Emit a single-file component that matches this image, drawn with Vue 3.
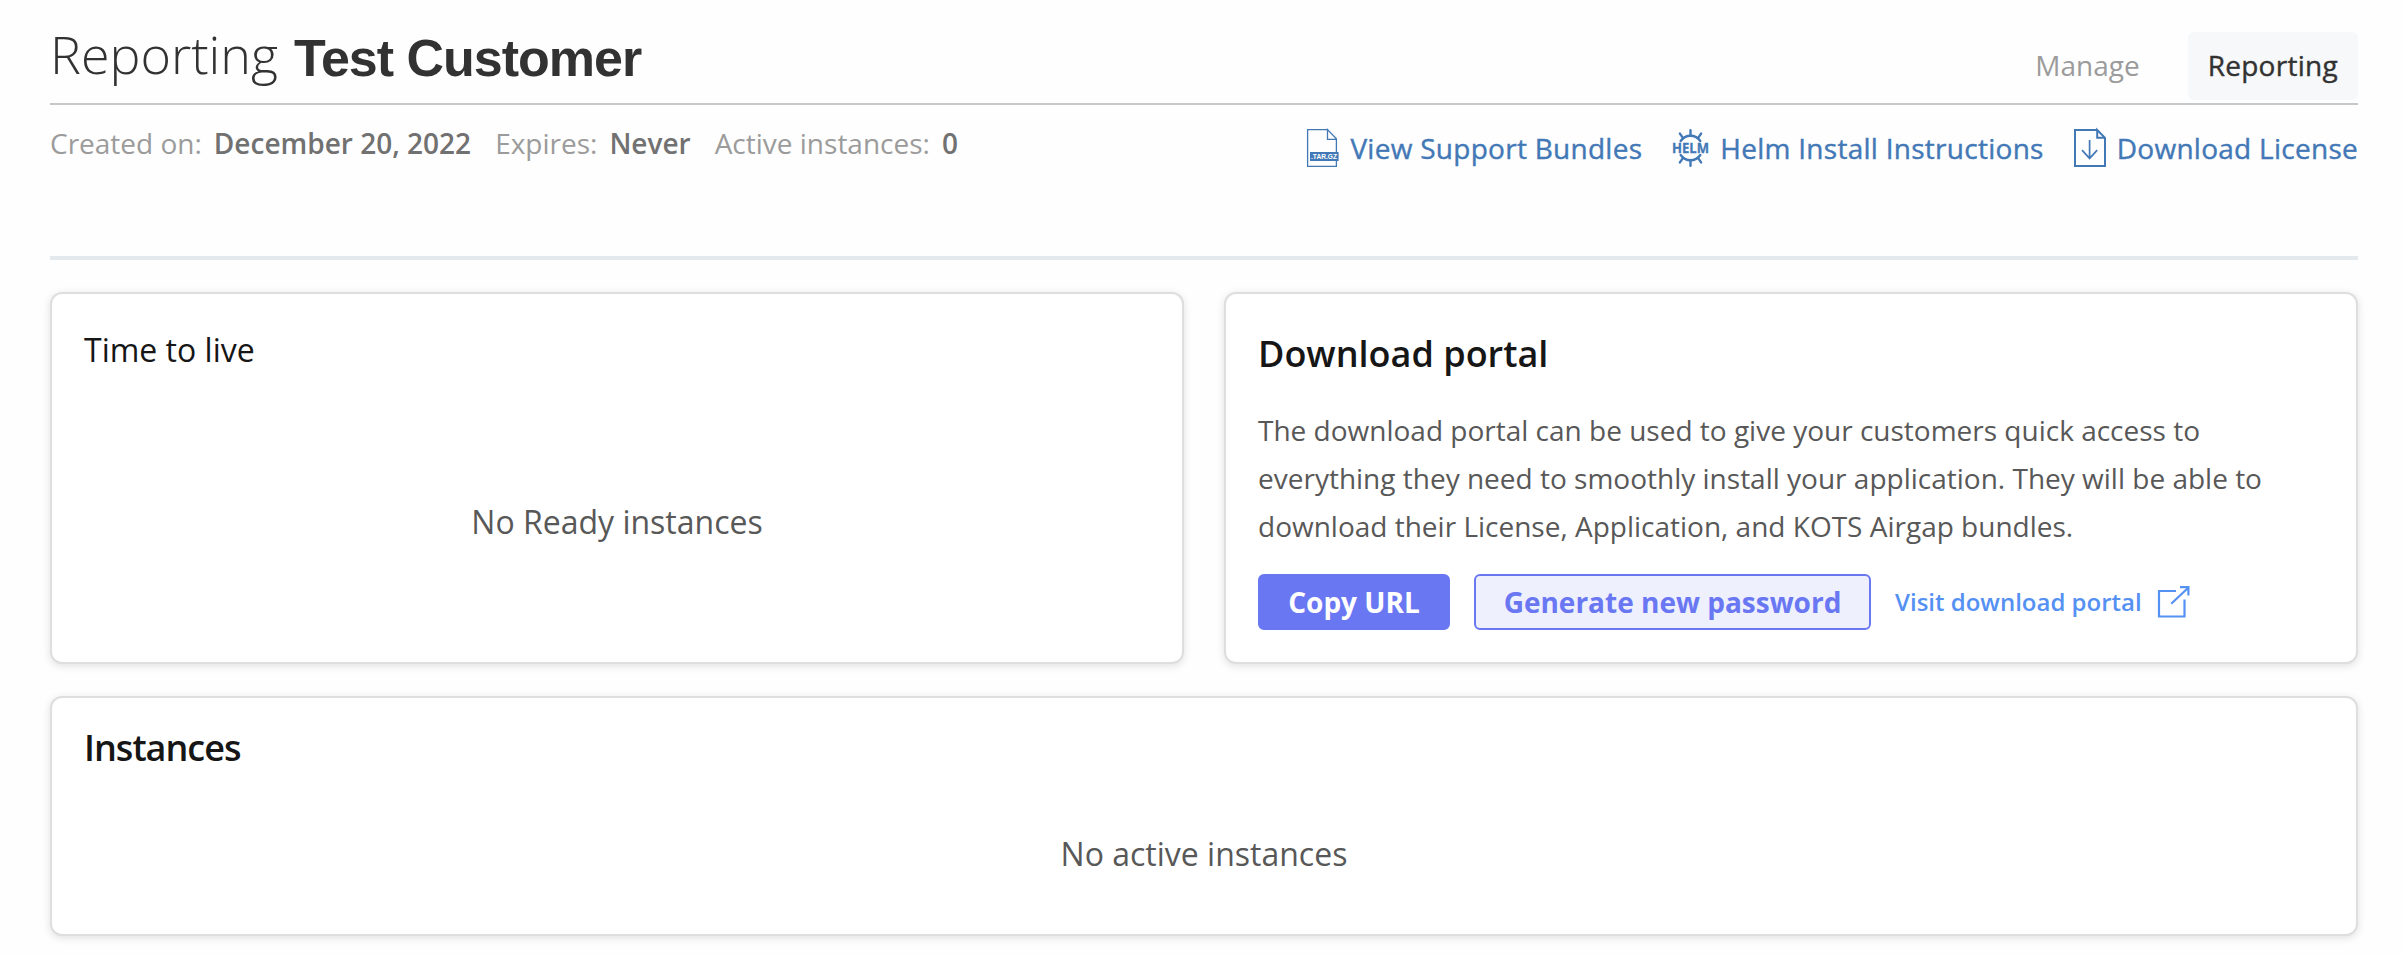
<script setup>
const meta = [
  { label: 'Created on:', value: 'December 20, 2022' },
  { label: 'Expires:', value: 'Never' },
  { label: 'Active instances:', value: '0' },
]
</script>

<template>
  <div class="page">
    <header class="header">
      <h1 class="title"><span class="title-light">Reporting</span><span class="title-name">Test Customer</span></h1>
      <nav class="tabs">
        <a class="tab">Manage</a>
        <a class="tab active">Reporting</a>
      </nav>
    </header>

    <section class="subheader">
      <div class="meta">
        <div v-for="m in meta" :key="m.label" class="meta-item">
          <span>{{ m.label }}</span><strong>{{ m.value }}</strong>
        </div>
      </div>
      <div class="links">
        <a class="link">
          <svg width="32" height="38" viewBox="0 0 32 38">
            <path d="M20.5.6H.6V37.4H29.4V9.8L20.5.6V10.4H29.4" fill="none" stroke="#4378b6" stroke-width="1.3" />
            <rect x="3" y="23" width="28.6" height="9" fill="#4378b6" />
            <text x="4" y="30.2" textLength="26" lengthAdjust="spacingAndGlyphs" font-family="Liberation Sans" font-weight="700" font-size="7.6" fill="#fff">.TAR.GZ</text>
          </svg>
          <span class="medium">View Support Bundles</span>
        </a>
        <a class="link">
          <svg width="37" height="38" viewBox="0 0 37 38">
            <g fill="none" stroke="#4378b6" stroke-width="2.4" stroke-linecap="round">
              <path d="M8.7 12A11.8 11.8 0 0 1 28.3 12M8.7 26A11.8 11.8 0 0 0 28.3 26" />
              <path d="M18.5 1.2V6M18.5 32V36.8M7.9 4.6L10.7 8.6M29.1 4.6L26.3 8.6M7.9 33.4L10.7 29.4M29.1 33.4L26.3 29.4" />
            </g>
            <text x="0" y="24.3" textLength="37" lengthAdjust="spacingAndGlyphs" font-family="Open Sans" font-weight="700" font-size="15" fill="#4378b6" stroke="#4378b6" stroke-width="0.3">HELM</text>
          </svg>
          <span class="medium">Helm Install Instructions</span>
        </a>
        <a class="link">
          <svg width="32" height="38" viewBox="0 0 32 38">
            <path d="M23.2 1H1V37H31V8.8L23.2 1V8.8H31" fill="none" stroke="#4378b6" stroke-width="2" />
            <path d="M15.6 11V29.4M8 21.2L15.6 29.4L23.2 21.2" fill="none" stroke="#4378b6" stroke-width="1.7" />
          </svg>
          <span class="medium">Download License</span>
        </a>
      </div>
    </section>

    <div class="cards">
      <section class="card ttl">
        <h2 class="ttl-title">Time to live</h2>
        <p class="empty">No Ready instances</p>
      </section>
      <section class="card portal">
        <h2 class="card-title">Download portal</h2>
        <p class="copy">
          The download portal can be used to give your customers quick access to<br />
          everything they need to smoothly install your application. They will be able to<br />
          download their License, Application, and KOTS Airgap bundles.
        </p>
        <div class="actions">
          <button class="btn primary">Copy URL</button>
          <button class="btn secondary">Generate new password</button>
          <a class="visit">
            <span class="visit-label">Visit download portal</span>
            <svg width="32" height="32" viewBox="0 0 32 32" fill="none" stroke="#5591f2" stroke-width="2.2">
              <path d="M18 5H1V30.5H26.5V13.5" />
              <path d="M13.2 17.8L30 2M22 1.2H30.4V9.6" />
            </svg>
          </a>
        </div>
      </section>
      <section class="card instances">
        <h2 class="card-title">Instances</h2>
        <p class="empty">No active instances</p>
      </section>
    </div>
  </div>
</template>

<style>
body { background: #fefefe; }
</style>

<style scoped>
.page {
  box-sizing: border-box;
  height: 956px;
  padding: 0 44px 0 50px;
  font-family: "Open Sans", "Noto Sans", sans-serif;
  font-size: 28px;
  white-space: nowrap;
}
h1, h2, p { margin: 0; font-weight: 400; }
.header {
  display: flex;
  justify-content: space-between;
  height: 103px;
  border-bottom: 2px solid #c4c8ca;
}
.title { display: flex; gap: 16px; padding-top: 18px; font-size: 52px; line-height: 72px; color: #323232; }
.title-light { font-weight: 300; }
.title-name { padding-top: 4px; font-family: "Liberation Sans", Arial, sans-serif; font-weight: 700; letter-spacing: -1px; }
.tabs { display: flex; gap: 28px; padding-top: 32px; }
.tab { height: 68px; padding: 0 20px; line-height: 66px; border-radius: 6px; color: #9b9b9b; }
.tab.active { background: #f7f8fa; color: #323232; letter-spacing: 0.28px; -webkit-text-stroke: 0.4px currentColor; }
.medium { letter-spacing: 0.27px; -webkit-text-stroke: 0.4px currentColor; }
.subheader {
  display: flex;
  justify-content: space-between;
  box-sizing: border-box;
  height: 155px;
  border-bottom: 4px solid #e3e9ed;
}
.meta { display: flex; gap: 24px; padding-top: 18px; line-height: 40px; color: #9b9b9b; }
.meta-item { display: flex; gap: 12px; }
.meta strong { font-weight: 600; color: #717171; }
.links { display: flex; gap: 30px; padding-top: 24px; line-height: 38px; color: #4378b6; }
.link { display: flex; gap: 11px; height: 38px; }
svg { display: block; flex: none; overflow: visible; }
.cards {
  display: grid;
  grid-template-columns: 1fr 1fr;
  grid-template-rows: 372px 240px;
  gap: 32px 40px;
  padding-top: 32px;
}
.card {
  box-sizing: border-box;
  border: 2px solid #dedede;
  border-radius: 12px;
  background: #fff;
  box-shadow: 0 2px 8px rgba(0, 0, 0, 0.12);
  padding: 0 32px;
}
.instances { grid-column: 1 / 3; padding-top: 26px; }
.portal { padding-top: 36px; }
.ttl { padding-top: 34px; }
.ttl-title { font-size: 32px; line-height: 44px; color: #161616; }
.card-title { font-size: 36px; font-weight: 600; line-height: 48px; color: #161616; }
.instances .card-title { letter-spacing: -1px; }
.empty { text-align: center; font-size: 32px; line-height: 44px; color: #585858; }
.ttl .empty { padding-top: 128px; }
.instances .empty { padding-top: 60px; }
.copy { padding-top: 28px; line-height: 48px; color: #585858; }
.actions { display: flex; align-items: center; padding-top: 24px; }
.btn {
  box-sizing: border-box;
  height: 56px;
  padding: 0;
  border: 2px solid #6a77f3;
  border-radius: 6px;
  font: 700 28px/52px "Open Sans", "Noto Sans", sans-serif;
}
.primary { width: 192px; background: #6a77f3; color: #fff; }
.secondary { width: 397px; margin-left: 24px; background: #eef0fe; color: #6a77f3; }
.visit { display: flex; align-items: center; gap: 16px; margin-left: 24px; font-size: 24px; font-weight: 600; color: #5591f2; }
.visit-label { padding-bottom: 2px; }
</style>
